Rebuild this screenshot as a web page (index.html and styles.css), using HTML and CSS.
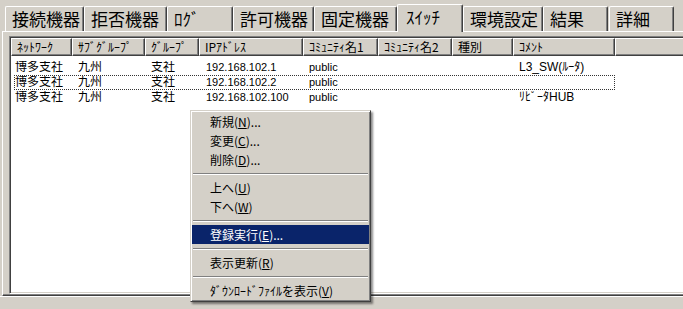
FILE: index.html
```html
<!DOCTYPE html>
<html lang="ja">
<head>
  <meta charset="UTF-8">
  <title>スイッチ</title>
  <link rel="stylesheet" href="styles.css">
</head>
<body>

  <div class="window">
    <!-- Tabs -->
    <div class="tabs">
      <div class="tab w79">接続機器</div>
      <div class="tab w83">拒否機器</div>
      <div class="tab w66">ﾛｸﾞ</div>
      <div class="tab w81">許可機器</div>
      <div class="tab w83">固定機器</div>
      <div class="tab w66 active">ｽｲｯﾁ</div>
      <div class="tab w80">環境設定</div>
      <div class="tab w65">結果</div>
      <div class="tab w65 last">詳細</div>
    </div>

    <!-- Tab page -->
    <div class="panel">
      <div class="list">
        <div class="head">
          <div class="hcol c1">ﾈｯﾄﾜｰｸ</div>
          <div class="hcol c2">ｻﾌﾞｸﾞﾙｰﾌﾟ</div>
          <div class="hcol c3">ｸﾞﾙｰﾌﾟ</div>
          <div class="hcol c4">IPｱﾄﾞﾚｽ</div>
          <div class="hcol c5">ｺﾐｭﾆﾃｨ名1</div>
          <div class="hcol c6">ｺﾐｭﾆﾃｨ名2</div>
          <div class="hcol c7">種別</div>
          <div class="hcol c8">ｺﾒﾝﾄ</div>
          <div class="hcol rest"></div>
        </div>

        <div class="rows">
          <div class="row">
            <span class="cell c1">博多支社</span>
            <span class="cell c2">九州</span>
            <span class="cell c3">支社</span>
            <span class="cell c4 en">192.168.102.1</span>
            <span class="cell c5 en">public</span>
            <span class="cell c6"></span>
            <span class="cell c7"></span>
            <span class="cell c8">L3_SW(ﾙｰﾀ)</span>
          </div>
          <div class="row focus">
            <span class="cell c1">博多支社</span>
            <span class="cell c2">九州</span>
            <span class="cell c3">支社</span>
            <span class="cell c4 en">192.168.102.2</span>
            <span class="cell c5 en">public</span>
            <span class="cell c6"></span>
            <span class="cell c7"></span>
            <span class="cell c8"></span>
          </div>
          <div class="row">
            <span class="cell c1">博多支社</span>
            <span class="cell c2">九州</span>
            <span class="cell c3">支社</span>
            <span class="cell c4 en">192.168.102.100</span>
            <span class="cell c5 en">public</span>
            <span class="cell c6"></span>
            <span class="cell c7"></span>
            <span class="cell c8">ﾘﾋﾟｰﾀHUB</span>
          </div>
        </div>
      </div>
    </div>

    <div class="status"></div>
  </div>

  <!-- Context menu -->
  <div class="menu">
    <div class="item">新規(<u>N</u>)...</div>
    <div class="item">変更(<u>C</u>)...</div>
    <div class="item">削除(<u>D</u>)...</div>
    <div class="sep"></div>
    <div class="item">上へ(<u>U</u>)</div>
    <div class="item">下へ(<u>W</u>)</div>
    <div class="sep"></div>
    <div class="item hot">登録実行(<u>E</u>)...</div>
    <div class="sep"></div>
    <div class="item">表示更新(<u>R</u>)</div>
    <div class="sep"></div>
    <div class="item">ﾀﾞｳﾝﾛｰﾄﾞﾌｧｲﾙを表示(<u>V</u>)</div>
  </div>

</body>
</html>
```

FILE: styles.css
```css
/* General Reset */
* {
  margin: 0;
  padding: 0;
  box-sizing: border-box;
}

body {
  font-family: 'Liberation Sans', 'Noto Sans CJK JP', sans-serif;
  font-size: 12px;
  color: #000;
  background: #d4d0c8;
  width: 683px;
  height: 309px;
  overflow: hidden;
  position: relative;
}

.window {
  width: 683px;
  height: 309px;
  display: flex;
  flex-direction: column;
}

/* Tabs */
.tabs {
  height: 31px;
  display: flex;
  align-items: flex-end;
  padding-left: 5px;
}

.tab {
  height: 25px;
  line-height: 24px;
  font-family: 'Noto Sans CJK JP', sans-serif;
  font-size: 17px;
  padding-left: 6px;
  white-space: nowrap;
  border-top: 1px solid #fff;
  border-left: 1px solid #fff;
  border-right: 1px solid #404040;
  box-shadow: inset -1px 0 #808080;
  border-radius: 2px 2px 0 0;
  background: #d4d0c8;
}

.tab.active {
  height: 28px;
  margin-bottom: -1px;
  padding-left: 8px;
  position: relative;
  z-index: 1;
}

.tab.last {
  margin-left: 1px;
}

.w65 { width: 65px; }
.w66 { width: 66px; }
.w79 { width: 79px; }
.w80 { width: 80px; }
.w81 { width: 81px; }
.w83 { width: 83px; }

/* Tab page */
.panel {
  margin-left: 2px;
  border-top: 1px solid #fff;
  border-left: 1px solid #fff;
  border-bottom: 1px solid #404040;
  box-shadow: inset 0 -1px #808080;
  padding: 4px 0 1px 6px;
}

.list {
  height: 258px;
  background: #fff;
  padding: 1px 0 1px 1px;
  border-top: 1px solid #808080;
  border-left: 1px solid #808080;
  border-bottom: 1px solid #fff;
  box-shadow: inset 1px 1px #404040, inset 0 -1px #d4d0c8;
}

/* Column header */
.head {
  display: flex;
  height: 18px;
}

.hcol {
  background: #d4d0c8;
  border-top: 1px solid #fff;
  border-left: 1px solid #fff;
  border-right: 1px solid #404040;
  border-bottom: 1px solid #404040;
  box-shadow: inset -1px -1px #808080;
  padding-left: 5px;
  line-height: 15px;
  font-family: 'Noto Sans CJK JP', sans-serif;
  font-size: 12px;
  white-space: nowrap;
  overflow: hidden;
}

.c1 { width: 61px; }
.c2 { width: 73px; }
.c3 { width: 54px; }
.c4 { width: 104px; }
.c5 { width: 75px; }
.c6 { width: 74px; }
.c7 { width: 61px; }
.c8 { width: 102px; }
.rest { flex: 1; border-right: none; box-shadow: inset 0 -1px #808080; }

/* Rows */
.rows {
  padding-top: 4px;
}

.row {
  display: flex;
  width: 601px;
  height: 15px;
  margin-left: 3px;
  border: 1px dotted transparent;
  line-height: 13px;
}

.row.focus {
  border-color: #333;
}

.cell {
  padding-left: 6px;
  white-space: nowrap;
  overflow: hidden;
}

.row .c1 { width: 57px; padding-left: 0; }
.row .c8 { width: 101px; }
.row .c4 { padding-left: 7px; }

.en {
  font-size: 11px;
}

.status {
  flex: 1;
  border-top: 1px solid #fff;
}

/* Context menu */
.menu {
  position: absolute;
  left: 190px;
  top: 110px;
  width: 181px;
  padding: 1px;
  background: #d4d0c8;
  border-top: 1px solid #d4d0c8;
  border-left: 1px solid #d4d0c8;
  border-right: 1px solid #404040;
  border-bottom: 1px solid #404040;
  box-shadow: inset 1px 1px #fff, inset -1px -1px #808080, 2px 2px 2px rgba(0, 0, 0, 0.45);
  font-family: 'Noto Sans CJK JP', sans-serif;
}

.item {
  height: 19px;
  line-height: 19px;
  padding-left: 18px;
  white-space: nowrap;
}

.item.hot {
  background: #0a246a;
  color: #fff;
}

.sep {
  height: 9px;
  padding-top: 4px;
  margin: 0 1px;
}

.sep::before {
  content: "";
  display: block;
  border-top: 1px solid #808080;
  border-bottom: 1px solid #fff;
}
```
